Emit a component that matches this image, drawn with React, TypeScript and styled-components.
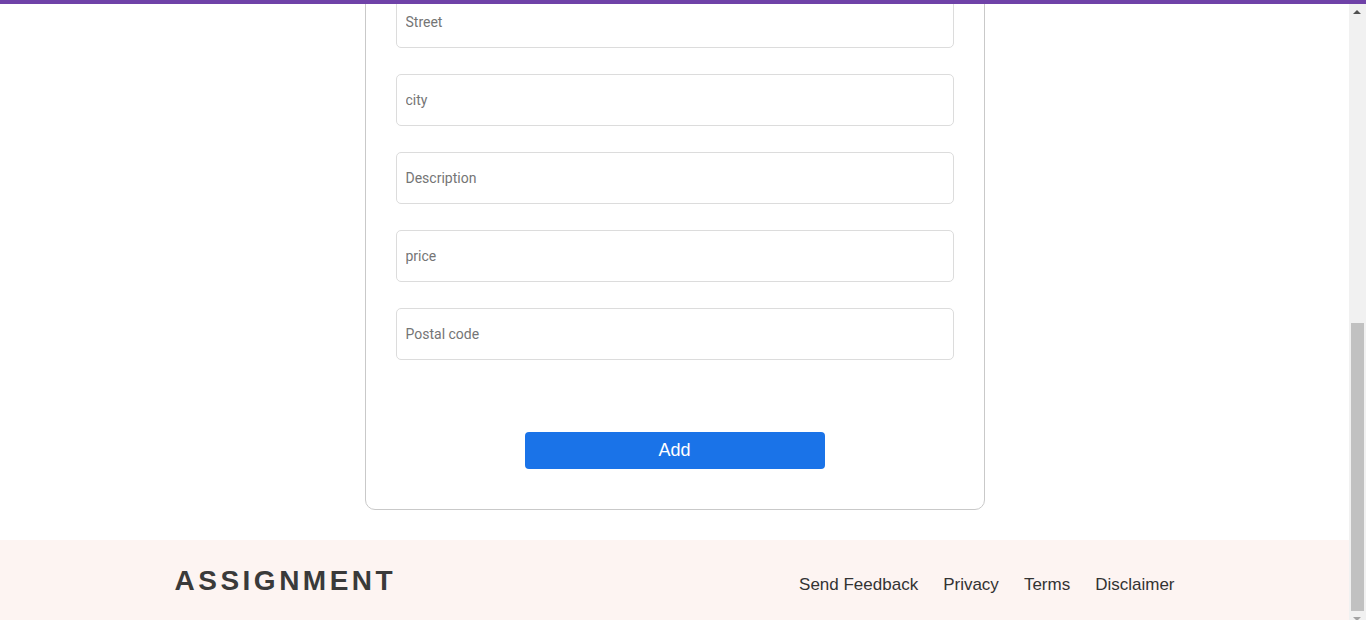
import React, { useLayoutEffect } from 'react';
import styled, { createGlobalStyle } from 'styled-components';

const GlobalStyle = createGlobalStyle`
  body {
    margin: 0 17px 0 0;
    background: #ffffff;
    font-family: Roboto, "Liberation Sans", Arial, sans-serif;
  }
  * {
    box-sizing: border-box;
  }
`;

const TopBar = styled.div`
  position: fixed;
  top: 0;
  left: 0;
  right: 0;
  height: 4px;
  background: #6f42a8;
  z-index: 20;
`;

// stand-in for the browser scrollbar seen in the screenshot
const ScrollTrack = styled.div`
  position: fixed;
  top: 0;
  right: 0;
  bottom: 0;
  width: 17px;
  background: #f1f1f1;
  z-index: 10;
`;

const ScrollArrow = styled.div<{ $down?: boolean }>`
  position: absolute;
  left: 4px;
  width: 0;
  height: 0;
  border-left: 4px solid transparent;
  border-right: 4px solid transparent;
  ${({ $down }) =>
    $down
      ? 'bottom: -1px; border-top: 4px solid #a3a3a3;'
      : 'top: 10px; border-bottom: 4px solid #505050;'}
`;

const ScrollThumb = styled.div`
  position: absolute;
  left: 2px;
  right: 2px;
  top: 323px;
  bottom: 9px;
  background: #c1c1c1;
`;

const Page = styled.div`
  padding-top: 34px;
`;

const Card = styled.form`
  width: 620px;
  margin: 0 auto;
  padding: 30px 30px 40px;
  border: 1px solid #c9c9c9;
  border-radius: 10px;
  display: flex;
  flex-direction: column;
`;

const Title = styled.h2`
  margin: 0 0 26px;
  font-family: "Liberation Sans", Arial, sans-serif;
  font-size: 26px;
  font-weight: 600;
  color: #333;
  text-align: center;
`;

const Fields = styled.div`
  display: flex;
  flex-direction: column;
  gap: 26px;
`;

const Input = styled.input`
  width: 100%;
  height: 52px;
  padding: 0 9px;
  border: 1px solid #dcdcdc;
  border-radius: 5px;
  font-family: Roboto, sans-serif;
  font-size: 14px;
  color: #333;
  outline: none;
  &::placeholder {
    color: #757575;
  }
`;

const Actions = styled.div`
  display: flex;
  justify-content: center;
  margin-top: 72px;
`;

const AddButton = styled.button`
  width: 300px;
  height: 37px;
  border: none;
  border-radius: 4px;
  background: #1a73e8;
  color: #ffffff;
  font-family: "Liberation Sans", Arial, sans-serif;
  font-size: 18px;
  cursor: pointer;
`;

const Footer = styled.footer`
  margin-top: 30px;
  height: 80px;
  background: #fdf4f2;
  display: flex;
  align-items: center;
`;

const FooterInner = styled.div`
  width: 1000px;
  margin: 0 auto;
  display: flex;
  justify-content: space-between;
  align-items: center;
`;

const Brand = styled.div`
  font-family: "Liberation Sans", Arial, sans-serif;
  font-size: 28px;
  font-weight: 700;
  letter-spacing: 3.5px;
  color: #3a3a3a;
  margin-top: 2px;
`;

const Links = styled.nav`
  display: flex;
  gap: 25px;
  margin-top: 9px;
`;

const FooterLink = styled.a`
  font-family: "Liberation Sans", Arial, sans-serif;
  font-size: 17px;
  color: #333;
  text-decoration: none;
`;

const fields = [
  'Property name',
  'Owner name',
  'Contact number',
  'House number',
  'Street',
  'city',
  'Description',
  'price',
  'Postal code',
];

export default function App() {
  useLayoutEffect(() => {
    window.scrollTo(0, document.documentElement.scrollHeight);
  }, []);

  return (
    <>
      <GlobalStyle />
      <TopBar />
      <ScrollTrack>
        <ScrollArrow />
        <ScrollThumb />
        <ScrollArrow $down />
      </ScrollTrack>
      <Page>
        <Card onSubmit={(e) => e.preventDefault()}>
          <Title>Add Property</Title>
          <Fields>
            {fields.map((f) => (
              <Input key={f} placeholder={f} />
            ))}
          </Fields>
          <Actions>
            <AddButton type="submit">Add</AddButton>
          </Actions>
        </Card>
        <Footer>
          <FooterInner>
            <Brand>ASSIGNMENT</Brand>
            <Links>
              <FooterLink href="#">Send Feedback</FooterLink>
              <FooterLink href="#">Privacy</FooterLink>
              <FooterLink href="#">Terms</FooterLink>
              <FooterLink href="#">Disclaimer</FooterLink>
            </Links>
          </FooterInner>
        </Footer>
      </Page>
    </>
  );
}
